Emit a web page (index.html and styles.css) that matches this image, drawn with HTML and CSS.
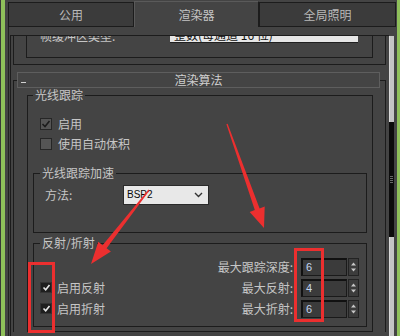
FILE: index.html
```html
<!DOCTYPE html>
<html lang="zh">
<head>
<meta charset="utf-8">
<link rel="stylesheet" href="styles.css">
</head>
<body>
<div class="app">
  <div class="edge-l"></div>
  <div class="main">
    <div class="tabs">
      <div class="tab t1">公用</div>
      <div class="tab t2 active">渲染器</div>
      <div class="tab t3">全局照明</div>
    </div>
    <div class="page">
      <div class="viewport">
        <div class="rollout r1">
          <div class="frame">
            <div class="grp">
              <div class="row">
                <span class="lbl">帧缓冲区类型:</span>
                <div class="combo white">整数(每通道 16 位)</div>
              </div>
            </div>
          </div>
        </div>
        <div class="rollout r2">
          <div class="rhead"><span class="minus"></span><span class="rtitle">渲染算法</span><span></span></div>
          <div class="frame">
            <fieldset class="fs outer">
              <legend>光线跟踪</legend>
              <div class="chk first"><span class="cb cb-grey"><svg width="10" height="10" viewBox="0 0 10 10"><polyline points="1.5,5 4,7.5 8.5,2" fill="none" stroke="#1c1c1c" stroke-width="1.6"/></svg></span><span>启用</span></div>
              <div class="chk"><span class="cb cb-grey"></span><span>使用自动体积</span></div>
              <fieldset class="fs inner accel">
                <legend>光线跟踪加速</legend>
                <div class="method">
                  <span class="mlbl">方法:</span>
                  <div class="combo light"><span class="ctext">BSP2</span><svg class="chev" width="9" height="6" viewBox="0 0 9 6"><polyline points="1,1 4.5,4.5 8,1" fill="none" stroke="#333" stroke-width="1.4"/></svg></div>
                </div>
              </fieldset>
              <fieldset class="fs inner refl">
                <legend>反射/折射</legend>
                <div class="rgrid">
                  <div class="spin-row r-a"><span class="slbl">最大跟踪深度:</span><span class="field">6</span><span class="spin"><svg width="9" height="16" viewBox="0 0 9 16"><polygon points="2,6.5 7,6.5 4.5,3.5" fill="#c8c8c8"/><polygon points="2,9.5 7,9.5 4.5,12.5" fill="#c8c8c8"/></svg></span></div>
                  <div class="chk dark r-b"><span class="cb cb-dark"><svg width="9" height="9" viewBox="0 0 9 9"><polyline points="1.5,4.5 3.7,6.8 7.5,2" fill="none" stroke="#e6e6e6" stroke-width="1.6"/></svg></span><span>启用反射</span></div>
                  <div class="spin-row r-b"><span class="slbl">最大反射:</span><span class="field">4</span><span class="spin"><svg width="9" height="16" viewBox="0 0 9 16"><polygon points="2,6.5 7,6.5 4.5,3.5" fill="#c8c8c8"/><polygon points="2,9.5 7,9.5 4.5,12.5" fill="#c8c8c8"/></svg></span></div>
                  <div class="chk dark r-c"><span class="cb cb-dark"><svg width="9" height="9" viewBox="0 0 9 9"><polyline points="1.5,4.5 3.7,6.8 7.5,2" fill="none" stroke="#e6e6e6" stroke-width="1.6"/></svg></span><span>启用折射</span></div>
                  <div class="spin-row r-c"><span class="slbl">最大折射:</span><span class="field">6</span><span class="spin"><svg width="9" height="16" viewBox="0 0 9 16"><polygon points="2,6.5 7,6.5 4.5,3.5" fill="#c8c8c8"/><polygon points="2,9.5 7,9.5 4.5,12.5" fill="#c8c8c8"/></svg></span></div>
                </div>
              </fieldset>
            </fieldset>
          </div>
        </div>
      </div>
      <div class="scrollbar">
        <div class="track-top"></div>
        <div class="thumb"><span class="grip"></span></div>
        <div class="track-bottom"></div>
      </div>
    </div>
  </div>
  <div class="edge-r"></div>
  <svg class="marks" width="400" height="336" viewBox="0 0 400 336">
    <rect x="29.5" y="263.5" width="24" height="68" fill="none" stroke="#ec2f2f" stroke-width="3"/>
    <rect x="295.5" y="249.5" width="27" height="71" fill="none" stroke="#ec2f2f" stroke-width="3"/>
    <polygon points="227.6,123.8 259.6,208.4 264.7,206.5 264,228 249.7,211.9 254.8,210.0 226.4,124.2" fill="#ec2f2f"/>
    <polygon points="149.5,190.4 106.6,248.2 110.9,251.6 91,264 98.3,241.8 102.6,245.2 148.5,189.6" fill="#ec2f2f"/>
  </svg>
</div>
</body>
</html>
```

FILE: styles.css
```css
* { box-sizing: border-box; margin: 0; padding: 0; }
html, body { width: 400px; height: 336px; overflow: hidden; background: #444; }
body {
  font-family: "Noto Sans CJK SC", "Noto Sans", sans-serif;
  font-size: 12px;
  line-height: 14px;
  color: #c6c6c6;
}
.app { position: relative; display: flex; width: 400px; height: 336px; background: #444; }
.edge-l { flex: none; width: 5px; background: linear-gradient(to right, #383838 0 1px, #8fc05a 1px 5px); }
.edge-r { flex: none; width: 3px; background: #8fc05a; margin-left: 1px; }
.main { flex: none; width: 391px; display: flex; flex-direction: column; }

/* tabs */
.tabs { display: flex; height: 27px; flex: none; }
.tab {
  height: 25px; margin-top: 2px;
  border: 1px solid #1c1c1c;
  background: #3b3b3b;
  display: flex; align-items: center; justify-content: center;
  color: #b9b9b9;
}
.t1 { width: 126px; margin-left: 3px; }
.t2 { width: 125px; }
.t3 { width: 137px; }
.tab.active {
  height: 26px; margin-top: 1px;
  background: #444;
  border-bottom: none;
  border-top-color: #5a5a5a;
  border-left-color: #5a5a5a;
  color: #c4c4c4;
}

/* page */
.page {
  margin-left: 3px;
  height: 309px;
  border-left: 1px solid #222;
  padding-top: 8px;
  display: flex; align-items: flex-start;
}
.viewport {
  width: 379px; height: 301px;
  margin-left: 1px;
  border-top: 1px solid #1c1c1c;
  border-left: 1px solid #1c1c1c;
  overflow: hidden;
}
.scrollbar { width: 5px; height: 300px; margin-top: 1px; display: flex; flex-direction: column; }
.track-top { height: 86px; background: #c4c4c4; border-left: 1px solid #dadada; }
.thumb { height: 115px; background: #0c0c0c; display: flex; align-items: center; justify-content: center; }
.grip {
  width: 3px; height: 8px;
  background: repeating-linear-gradient(to bottom, #6a6a6a 0 1px, transparent 1px 2px);
}
.track-bottom { flex: 1; background: #c4c4c4; border-left: 1px solid #dadada; }

/* rollout 1 (scrolled mostly off) */
.r1 { margin-bottom: 7px; }
.r1 .frame {
  margin: 0 3px 0 2px;
  border: 1px solid #1c1c1c; border-top: none;
  padding: 0 12px 6px 12px;
}
.r1 .grp {
  border: 1px solid #1c1c1c; border-top: none;
  padding: 0 14px 14px 13px;
}
.r1 .row { display: flex; height: 18px; margin-top: -11px; }
.r1 .lbl { width: 130px; flex: none; line-height: 16px; padding-top: 3px; }
.combo.white {
  flex: 1;
  background: #e6e6e6;
  border-bottom: 1px solid #202020;
  color: #111;
  padding: 3px 0 0 4px;
  line-height: 14px;
  overflow: hidden; white-space: nowrap;
}

/* rollout 2 */
.rhead {
  position: relative; z-index: 1;
  height: 16px;
  margin: 0 9px 0 6px;
  border: 1px solid #5e5e5e;
  background: #444;
  display: grid; grid-template-columns: 1fr auto 1fr;
  align-items: center;
}
.minus { width: 5px; height: 1px; background: #d2d2d2; margin-left: 3px; align-self: end; margin-bottom: 4px; }
.rtitle { color: #d0d0d0; }
.r2 .frame {
  margin: -8px 3px 0 2px;
  border: 1px solid #1c1c1c; border-bottom: none;
  padding: 7px 12px 0 13px;
}

.fs { border: 1px solid #1c1c1c; padding: 0; min-width: 0; }
.fs legend { padding: 0 2px; line-height: 14px; color: #c6c6c6; }
.outer { padding-bottom: 4px; }
.outer > legend { margin-left: 5px; }
.inner { margin: 0 5px; }
.inner > legend { margin-left: 6px; }

.chk { display: flex; align-items: center; height: 20px; margin-left: 12px; gap: 6px; }
.chk.first { margin-top: 12px; }
.cb { width: 12px; height: 12px; flex: none; display: flex; align-items: center; justify-content: center; }
.cb-grey { background: #555; border: 1px solid #262626; }
.cb-dark { width: 12px; height: 11px; background: #1e1e1e; border: 1px solid #333; }

.accel { margin-top: 12px; padding-bottom: 27px; }
.method { display: flex; height: 20px; margin-top: 5px; padding-left: 11px; }
.mlbl { width: 78px; flex: none; line-height: 20px; }
.combo.light {
  width: 86px; height: 20px;
  background: #e8e8e8;
  border: 1px solid #2a2a2a;
  display: flex; align-items: center; justify-content: space-between;
  padding: 0 5px 0 3px;
}
.ctext { font-family: "Liberation Sans", Arial, sans-serif; font-size: 10px; color: #0a0a0a; }

.refl { margin-top: 3px; padding-bottom: 7px; }
.rgrid {
  display: grid;
  grid-template-columns: 1fr auto;
  grid-template-rows: 21px 21px 21px;
  margin-top: 6px;
  padding: 0 7px 0 6px;
}
.rgrid .chk { margin-left: 0; gap: 5px; height: 21px; grid-column: 1; }
.spin-row { grid-column: 2; justify-self: end; display: flex; align-items: center; height: 21px; }
.r-a { grid-row: 1; }
.r-b { grid-row: 2; }
.r-c { grid-row: 3; }
.slbl { text-align: right; }
.field {
  width: 46px; height: 18px; margin-left: 8px;
  background: #3b3b3b;
  border-top: 2px solid #111; border-left: 2px solid #111;
  border-right: 1px solid #1a1a1a; border-bottom: 1px solid #1a1a1a;
  font-family: "Liberation Sans", Arial, sans-serif; font-size: 11px;
  line-height: 15px; padding-left: 3px;
  color: #c4d6f0;
}
.spin {
  width: 11px; height: 18px; margin-left: 1px;
  background: #3c3c3c;
  border: 1px solid #232323;
  display: flex; align-items: center; justify-content: center;
}

.marks { position: absolute; left: 0; top: 0; pointer-events: none; z-index: 10; }
```
